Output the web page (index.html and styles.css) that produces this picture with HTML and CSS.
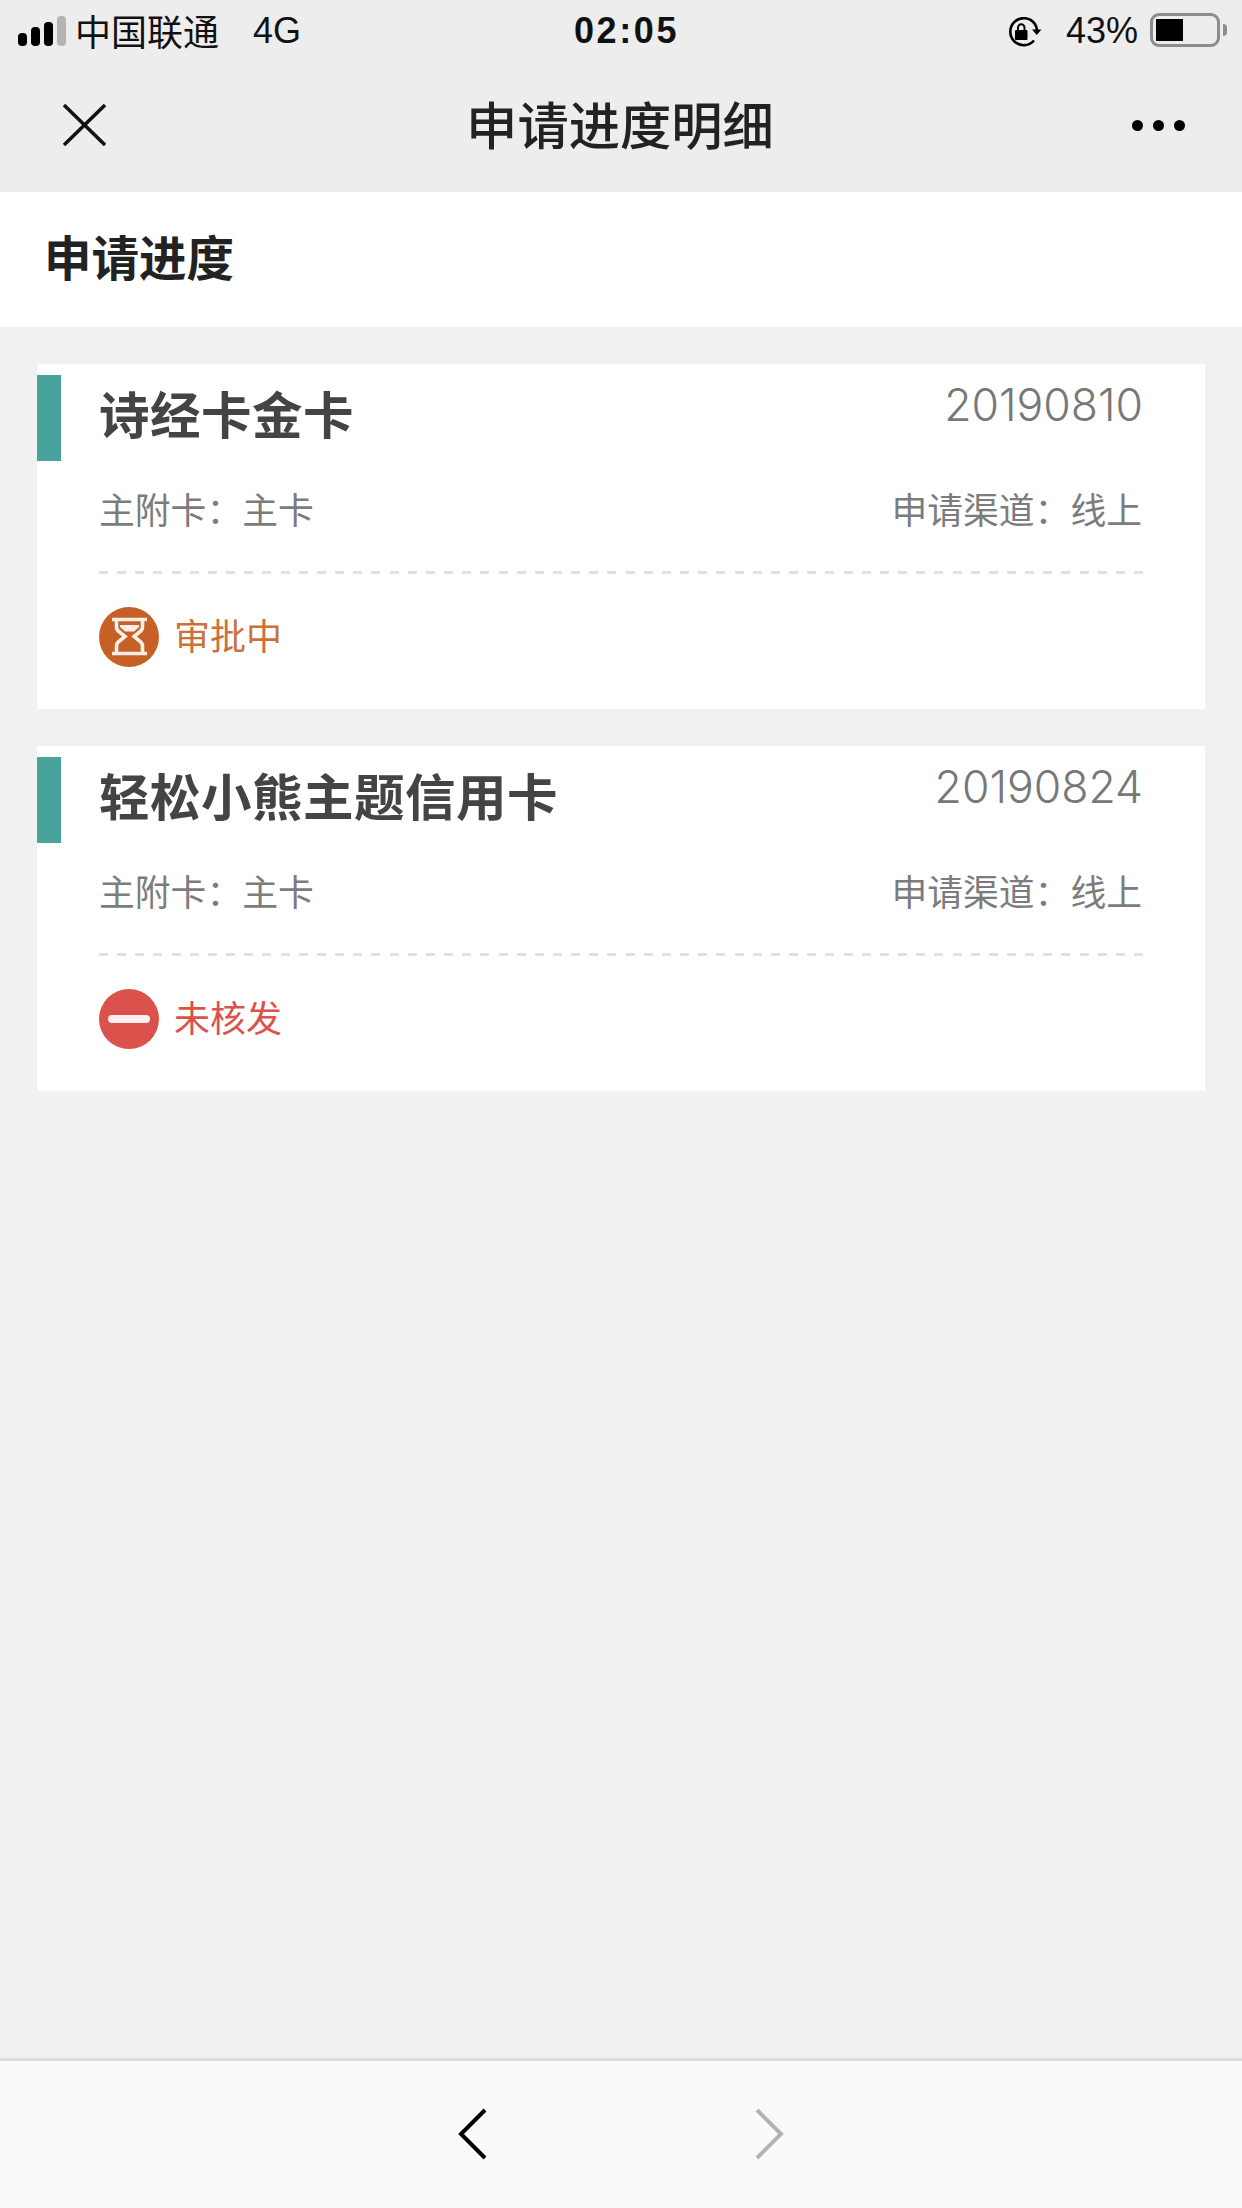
FILE: index.html
```html
<!DOCTYPE html>
<html lang="zh-CN">
<head>
    <meta charset="UTF-8">
    <meta name="viewport" content="width=device-width, initial-scale=1.0">
    <title>申请进度明细</title>
    <link rel="stylesheet" href="styles.css">
</head>
<body>
    <header class="top">
        <div class="status-bar">
            <div class="status-left">
                <svg class="signal" width="48" height="30" viewBox="0 0 48 30">
                    <rect x="0" y="17" width="9" height="13" rx="4" fill="#000"/>
                    <rect x="13" y="11" width="9" height="19" rx="4" fill="#000"/>
                    <rect x="26" y="6" width="9" height="24" rx="4" fill="#000"/>
                    <rect x="39" y="0" width="9" height="30" rx="4" fill="#b4b4b4"/>
                </svg>
                <span class="carrier">中国联通</span>
                <span class="network">4G</span>
            </div>
            <div class="clock">02:05</div>
            <div class="status-right">
                <svg class="rotate-lock" width="36" height="30" viewBox="0 0 36 30">
                    <path d="M28 23.5A13.5 13.5 0 1 1 28.6 6.6Q30.6 9.500 31 13" fill="none" stroke="#000" stroke-width="2.600"/>
                    <path d="M26 12.500H35.500L30.700 18Z" fill="#000"/>
                    <rect x="9" y="13" width="12.500" height="10" rx="1" fill="#000"/>
                    <path d="M12 13.500V10.500A3.200 3.200 0 0 1 18.500 10.500V13.500" fill="none" stroke="#000" stroke-width="2"/>
                </svg>
                <span class="battery-text">43%</span>
                <div class="battery">
                    <div class="battery-body"><div class="battery-level"></div></div>
                    <div class="battery-nub"></div>
                </div>
            </div>
        </div>
        <nav class="nav-bar">
            <svg class="close-icon" width="43" height="42" viewBox="0 0 43 42">
                <path d="M1 1L42 41M42 1L1 41" fill="none" stroke="#111" stroke-width="3.500"/>
            </svg>
            <div class="nav-title">申请进度明细</div>
            <div class="more-icon"><i></i><i></i><i></i></div>
        </nav>
    </header>

    <main class="content">
        <h2 class="section-title">申请进度</h2>

        <section class="card">
            <div class="card-head">
                <div class="accent"></div>
                <div class="card-name">诗经卡金卡</div>
                <div class="card-date">20190810</div>
            </div>
            <div class="card-meta">
                <span>主附卡：主卡</span>
                <span>申请渠道：线上</span>
            </div>
            <div class="dash-line"></div>
            <div class="card-status status-pending">
                <svg width="60" height="60" viewBox="0 0 60 60">
                    <circle cx="30" cy="30" r="30" fill="#c66027"/>
                    <path d="M13 12.500H48M13 46.500H48M17.500 13V20Q17.500 23 20.500 25L26 29.500L20.500 34Q17.500 36 17.500 39V46M43.500 13V20Q43.500 23 40.500 25L35 29.500L40.500 34Q43.500 36 43.500 39V46" fill="none" stroke="#fbeee4" stroke-width="3.600"/>
                    <path d="M21 18H40V20L35 24.500H26L21 20Z" fill="#fbeee4"/>
                </svg>
                <span>审批中</span>
            </div>
        </section>

        <section class="card">
            <div class="card-head">
                <div class="accent"></div>
                <div class="card-name">轻松小熊主题信用卡</div>
                <div class="card-date">20190824</div>
            </div>
            <div class="card-meta">
                <span>主附卡：主卡</span>
                <span>申请渠道：线上</span>
            </div>
            <div class="dash-line"></div>
            <div class="card-status status-rejected">
                <svg width="60" height="60" viewBox="0 0 60 60">
                    <circle cx="30" cy="30" r="30" fill="#db524c"/>
                    <rect x="9" y="26" width="42" height="8" rx="4" fill="#fdf1f0"/>
                </svg>
                <span>未核发</span>
            </div>
        </section>
    </main>

    <footer class="toolbar">
        <svg width="30" height="52" viewBox="0 0 30 52">
            <path d="M28 2L4 26L28 50" fill="none" stroke="#000" stroke-width="4"/>
        </svg>
        <svg width="30" height="52" viewBox="0 0 30 52">
            <path d="M2 2L26 26L2 50" fill="none" stroke="#b3b3b3" stroke-width="4"/>
        </svg>
    </footer>
</body>
</html>
```

FILE: styles.css
```css
* {
    box-sizing: border-box;
}

html, body {
    margin: 0;
    height: 2208px;
}

body {
    display: flex;
    flex-direction: column;
    background-color: #f1f1f1;
    font-family: "Liberation Sans", "Noto Sans CJK SC", sans-serif;
    overflow: hidden;
}

.top {
    background-color: #ededed;
    height: 192px;
}

.status-bar {
    display: grid;
    grid-template-columns: 1fr auto 1fr;
    align-items: center;
    height: 60px;
    padding: 2px 15px 0 18px;
    font-size: 36px;
    color: #111;
}

.status-left, .status-right {
    display: flex;
    align-items: center;
}

.status-right {
    justify-content: flex-end;
}

.carrier {
    margin: -3px 0 0 9px;
}

.network {
    margin-left: 34px;
}

.clock {
    font-weight: bold;
    letter-spacing: 2.600px;
    margin-left: 8px;
}

.rotate-lock {
    margin-top: 2px;
}

.battery-text {
    margin: 0 12px 0 24px;
}

.battery {
    display: flex;
    align-items: center;
    margin-top: -2px;
}

.battery-body {
    width: 70px;
    height: 34px;
    border: 3px solid #8c8c8c;
    border-radius: 9px;
    padding: 3px;
}

.battery-level {
    width: 27px;
    height: 100%;
    background-color: #000;
}

.battery-nub {
    width: 4px;
    height: 12px;
    margin-left: 3px;
    background-color: #8c8c8c;
    border-radius: 0 4px 4px 0;
}

.nav-bar {
    display: grid;
    grid-template-columns: 1fr auto 1fr;
    align-items: center;
    height: 132px;
    padding: 0 57px 2px 63px;
}

.nav-title {
    margin: 0 8px 6px 0;
    font-size: 51.300px;
    font-weight: 500;
    color: #222;
}

.more-icon {
    display: flex;
    justify-content: flex-end;
    gap: 10px;
}

.more-icon i {
    width: 11px;
    height: 11px;
    border-radius: 50%;
    background-color: #000;
}

.content {
    flex: 1;
}

.section-title {
    margin: 0 0 37px;
    height: 135px;
    padding: 0 44px;
    line-height: 136px;
    font-size: 47.500px;
    font-weight: bold;
    color: #222;
    background-color: #fff;
}

.card {
    margin: 0 37px 37px;
    padding: 11px 62px 42px 0;
    height: 345px;
    background-color: #fff;
}

.card-head {
    display: flex;
    height: 86px;
}

.accent {
    width: 24px;
    height: 86px;
    margin-right: 38px;
    background-color: #48a39a;
}

.card-name {
    flex: 1;
    font-size: 50.500px;
    font-weight: bold;
    line-height: 84px;
    letter-spacing: 0.500px;
    color: #444;
}

.card-date {
    font-family: Inter, sans-serif;
    font-size: 44.500px;
    font-weight: 300;
    line-height: 60px;
    color: #777;
}

.card-meta {
    display: flex;
    justify-content: space-between;
    margin: 26px 1px 0 62px;
    font-size: 35.800px;
    line-height: 50px;
    color: #7c7c7c;
}

.dash-line {
    height: 3px;
    margin: 34px 0 0 62px;
    background-image: repeating-linear-gradient(90deg, #e0e0e0 0, #e0e0e0 9px, transparent 9px, transparent 18.160px);
}

.card-status {
    display: flex;
    gap: 15px;
    height: 60px;
    margin: 33px 0 0 62px;
    font-size: 36px;
}

.card-status span {
    line-height: 62px;
}

.status-pending {
    color: #c9723c;
}

.status-rejected {
    color: #db524c;
}

.toolbar {
    display: flex;
    justify-content: center;
    align-items: center;
    gap: 268px;
    height: 150px;
    padding-bottom: 2px;
    border-top: 3px solid #dcdcdc;
    background-color: #fafafa;
}
```
